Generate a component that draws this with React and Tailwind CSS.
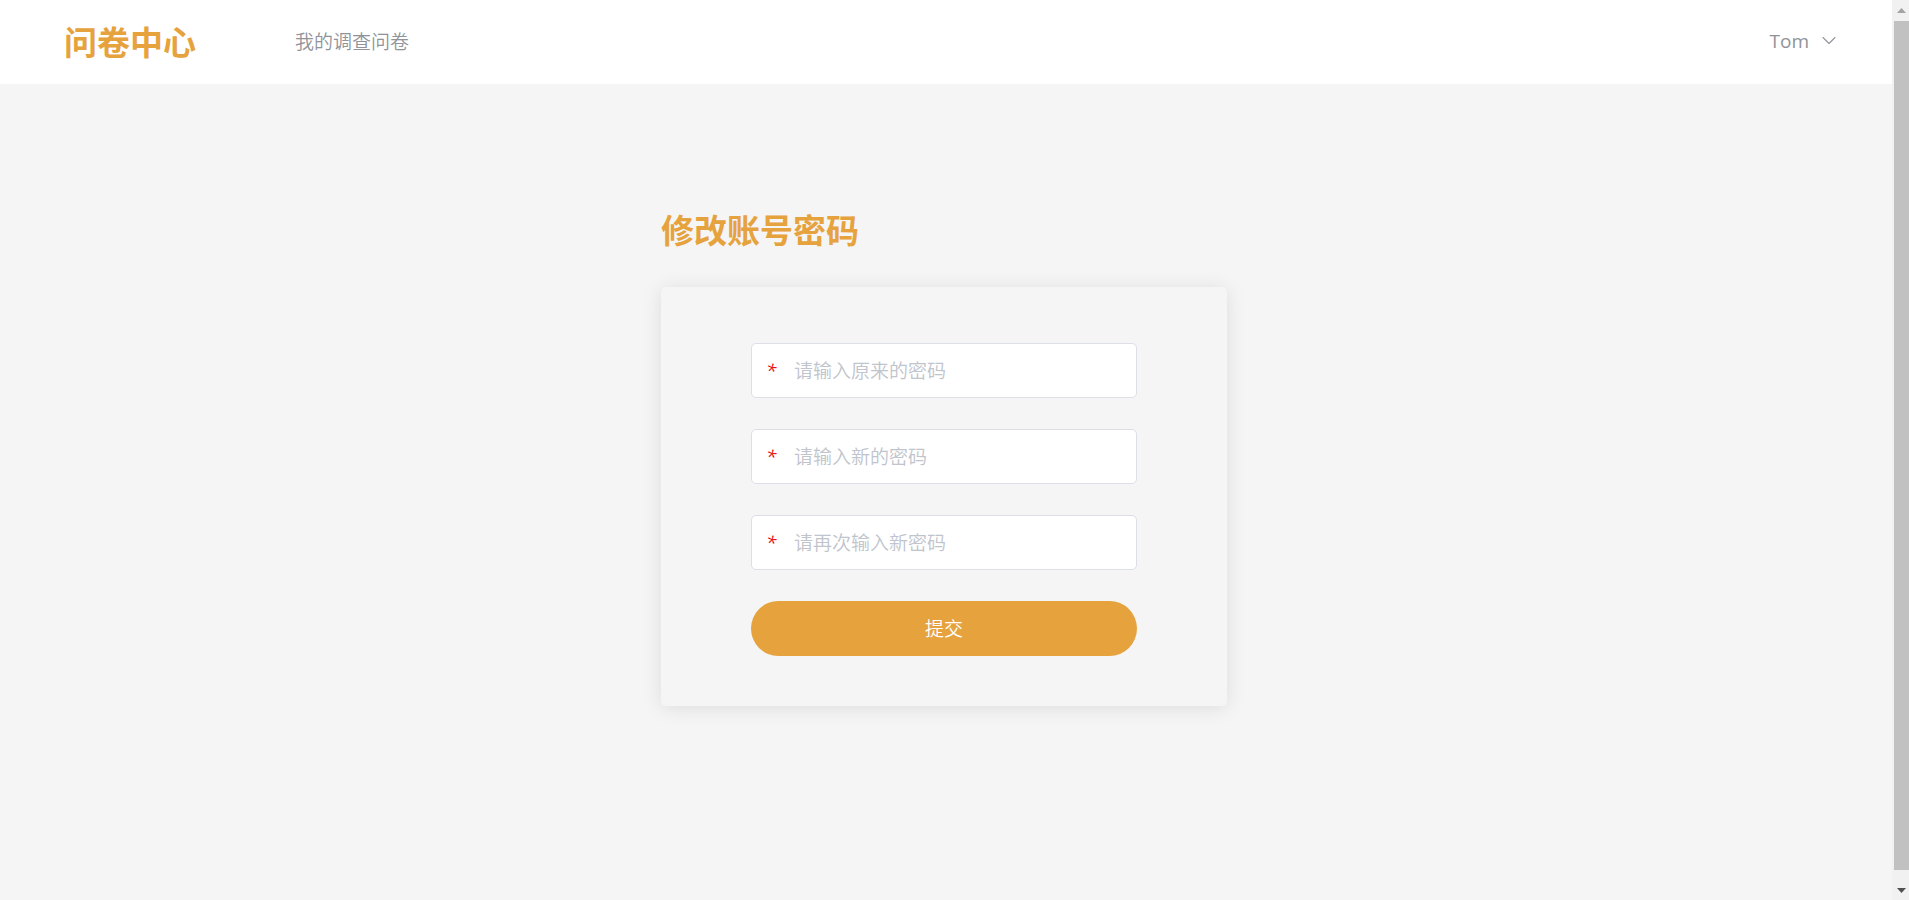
const fields = [
    { name: 'oldPassword', placeholder: '请输入原来的密码' },
    { name: 'newPassword', placeholder: '请输入新的密码' },
    { name: 'confirmPassword', placeholder: '请再次输入新密码' },
];

function Header() {
    return (
        <header className="h-[84px] pb-[2px] bg-white flex items-center justify-between pl-16 pr-[55px]">
            <div className="flex items-center gap-[99px]">
                <span className="text-[33px] leading-10 font-bold text-[#e6a23c]">问卷中心</span>
                <nav>
                    <a href="#surveys" className="text-[19px] leading-6 font-[350] text-[#909399]">我的调查问卷</a>
                </nav>
            </div>
            <button type="button" className="flex items-center gap-3 text-[19px] leading-6 text-[#909399] font-['Open_Sans','Noto_Sans_CJK_SC',sans-serif]">
                Tom
                <svg viewBox="0 0 16 16" className="w-4 h-4" fill="none" stroke="currentColor" strokeWidth="1.1" strokeLinecap="round" strokeLinejoin="round" aria-hidden="true">
                    <path d="M2 4.5 L8 10.5 L14 4.5" />
                </svg>
            </button>
        </header>
    );
}

function PasswordForm() {
    return (
        <form className="mt-[34px] pt-14 pb-[50px] px-[90px] rounded-[5px] shadow-[0_2px_20px_rgba(0,0,0,0.1)]" onSubmit={(e) => e.preventDefault()}>
            <div className="flex flex-col gap-[31px]">
                {fields.map((field) => (
                    <label key={field.name} htmlFor={field.name} className="h-[55px] pb-[2px] flex items-center bg-white border border-[#dcdfe6] rounded-[5px]">
                        <span className="w-[42px] pl-[14px] text-[19px] leading-6 text-[#ee1111] italic font-['Open_Sans',sans-serif]">*</span>
                        <input
                            id={field.name}
                            name={field.name}
                            type="password"
                            placeholder={field.placeholder}
                            className="flex-1 min-w-0 text-[19px] leading-7 font-[350] text-[#606266] placeholder-[#c0c4cc] outline-none"
                        />
                    </label>
                ))}
                <button type="submit" className="h-[55px] pb-[2px] rounded-full bg-[#e6a23c] text-[19px] leading-6 font-[350] text-white">提交</button>
            </div>
        </form>
    );
}

function Scrollbar() {
    return (
        <div className="w-[17px] shrink-0 flex flex-col items-end bg-[#f1f1f1]" aria-hidden="true">
            <div className="h-[21px] w-[15px] flex justify-center items-center">
                <svg viewBox="0 0 9 5" className="w-[9px] h-[5px]"><path d="M0 5 L4.5 0 L9 5Z" fill="#a3a3a3" /></svg>
            </div>
            <div className="flex-1 w-[15px] bg-[#c1c1c1]" />
            <div className="h-[30px] w-[15px] flex justify-center items-end pb-[7px]">
                <svg viewBox="0 0 9 5" className="w-[9px] h-[5px]"><path d="M0 0 L4.5 5 L9 0Z" fill="#505050" /></svg>
            </div>
        </div>
    );
}

export default function App() {
    return (
        <div className="h-screen flex bg-[#f5f5f5] font-['Noto_Sans_CJK_SC',sans-serif]">
            <div className="flex-1 min-w-0 overflow-hidden">
                <Header />
                <main className="pt-[121px] pr-1">
                    <div className="w-full max-w-[566px] mx-auto">
                        <h1 className="text-[33px] leading-[48px] font-bold text-[#e6a23c]">修改账号密码</h1>
                        <PasswordForm />
                    </div>
                </main>
            </div>
            <Scrollbar />
        </div>
    );
}
